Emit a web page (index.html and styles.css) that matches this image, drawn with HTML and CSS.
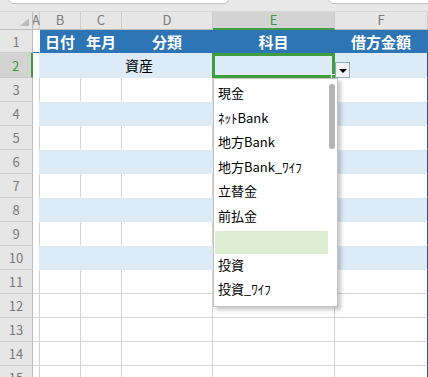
FILE: index.html
```html
<!DOCTYPE html>
<html lang="ja">
<head>
    <meta charset="UTF-8">
    <title>科目 入力</title>
    <link rel="stylesheet" href="styles.css">
</head>
<body>
    <div class="topbar">
        <div class="bar-box box-left"></div>
        <div class="bar-box box-right"></div>
    </div>

    <div class="sheet">
        <!-- 列見出し -->
        <div class="row col-head">
            <div class="corner"><span class="tri"></span></div>
            <div class="ch">A</div>
            <div class="ch">B</div>
            <div class="ch">C</div>
            <div class="ch">D</div>
            <div class="ch active">E</div>
            <div class="ch">F</div>
        </div>

        <!-- テーブル見出し -->
        <div class="row head">
            <div class="rh">1</div>
            <div class="c a"></div>
            <div class="c">日付</div>
            <div class="c">年月</div>
            <div class="c">分類</div>
            <div class="c">科目</div>
            <div class="c">借方金額</div>
        </div>

        <div class="row band r2">
            <div class="rh sel">2</div>
            <div class="c a"></div>
            <div class="c"></div>
            <div class="c"></div>
            <div class="c left">資産</div>
            <div class="c"></div>
            <div class="c last"></div>
        </div>

        <div class="row plain">
            <div class="rh">3</div><div class="c a"></div><div class="c"></div><div class="c"></div><div class="c"></div><div class="c"></div><div class="c last"></div>
        </div>
        <div class="row band">
            <div class="rh">4</div><div class="c a"></div><div class="c"></div><div class="c"></div><div class="c"></div><div class="c"></div><div class="c last"></div>
        </div>
        <div class="row plain">
            <div class="rh">5</div><div class="c a"></div><div class="c"></div><div class="c"></div><div class="c"></div><div class="c"></div><div class="c last"></div>
        </div>
        <div class="row band">
            <div class="rh">6</div><div class="c a"></div><div class="c"></div><div class="c"></div><div class="c"></div><div class="c"></div><div class="c last"></div>
        </div>
        <div class="row plain">
            <div class="rh">7</div><div class="c a"></div><div class="c"></div><div class="c"></div><div class="c"></div><div class="c"></div><div class="c last"></div>
        </div>
        <div class="row band">
            <div class="rh">8</div><div class="c a"></div><div class="c"></div><div class="c"></div><div class="c"></div><div class="c"></div><div class="c last"></div>
        </div>
        <div class="row plain">
            <div class="rh">9</div><div class="c a"></div><div class="c"></div><div class="c"></div><div class="c"></div><div class="c"></div><div class="c last"></div>
        </div>
        <div class="row band">
            <div class="rh">10</div><div class="c a"></div><div class="c"></div><div class="c"></div><div class="c"></div><div class="c"></div><div class="c last"></div>
        </div>

        <!-- テーブル外 -->
        <div class="row">
            <div class="rh">11</div><div class="c a"></div><div class="c"></div><div class="c"></div><div class="c"></div><div class="c"></div><div class="c last"></div>
        </div>
        <div class="row">
            <div class="rh">12</div><div class="c a"></div><div class="c"></div><div class="c"></div><div class="c"></div><div class="c"></div><div class="c last"></div>
        </div>
        <div class="row">
            <div class="rh">13</div><div class="c a"></div><div class="c"></div><div class="c"></div><div class="c"></div><div class="c"></div><div class="c last"></div>
        </div>
        <div class="row">
            <div class="rh">14</div><div class="c a"></div><div class="c"></div><div class="c"></div><div class="c"></div><div class="c"></div><div class="c last"></div>
        </div>
        <div class="row">
            <div class="rh">15</div><div class="c a"></div><div class="c"></div><div class="c"></div><div class="c"></div><div class="c"></div><div class="c last"></div>
        </div>

        <!-- 選択セルと入力規則のリスト -->
        <div class="selection"><span class="fill-handle"></span></div>
        <div class="drop-btn"><span class="arrow"></span></div>

        <ul class="dropdown">
            <li>現金</li>
            <li>ﾈｯﾄBank</li>
            <li>地方Bank</li>
            <li>地方Bank_ﾜｲﾌ</li>
            <li>立替金</li>
            <li>前払金</li>
            <li class="hover"></li>
            <li>投資</li>
            <li>投資_ﾜｲﾌ</li>
            <span class="thumb"></span>
        </ul>
    </div>
</body>
</html>
```

FILE: styles.css
```css
* {
    box-sizing: border-box;
    margin: 0;
    padding: 0;
}

body {
    font-family: "Noto Sans CJK JP", "Noto Sans", sans-serif;
    background: #ffffff;
    width: 428px;
    height: 377px;
    overflow: hidden;
}

/* 上部の数式バー部分 */
.topbar {
    position: relative;
    height: 12px;
    background: #e8e8e8;
    border-bottom: 1px solid #d6d6d6;
}

.bar-box {
    position: absolute;
    top: -4px;
    height: 8px;
    background: #ffffff;
    border: 1px solid #c4c4c4;
    border-radius: 0 0 5px 5px;
}

.box-left {
    left: 8px;
    width: 221px;
}

.box-right {
    left: 328px;
    width: 110px;
}

.sheet {
    position: relative;
}

.row {
    display: grid;
    grid-template-columns: 33px 7px 41px 41px 91px 122px 93px;
    height: 24px;
}

.c {
    border-right: 1px solid #d4d4d4;
    border-bottom: 1px solid #d4d4d4;
    display: flex;
    align-items: center;
    justify-content: center;
    white-space: nowrap;
    font-size: 14px;
    color: #000;
}

.c.last {
    border-right: 1px solid #2f4f8f;
}

.c.left {
    justify-content: flex-start;
    padding-left: 3px;
}

.rh {
    background: #e6e6e6;
    border-right: 1px solid #bdbdbd;
    border-bottom: 1px solid #cbcbcb;
    color: #7a7a7a;
    font-size: 13px;
    display: flex;
    align-items: center;
    justify-content: center;
}

.rh.sel {
    background: #d3d3d3;
    color: #3a9a3a;
    border-right: 2px solid #3f9f3f;
}

/* 列見出し */
.col-head {
    height: 18px;
}

.corner {
    position: relative;
    background: #e6e6e6;
    border-right: 1px solid #bdbdbd;
    border-bottom: 1px solid #bdbdbd;
}

.tri {
    position: absolute;
    right: 3px;
    bottom: 3px;
    width: 0;
    height: 0;
    border-left: 9px solid transparent;
    border-bottom: 8px solid #bcbcbc;
}

.ch {
    background: #e6e6e6;
    border-right: 1px solid #cbcbcb;
    border-bottom: 1px solid #bdbdbd;
    color: #7a7a7a;
    font-size: 13px;
    line-height: 16px;
    display: flex;
    justify-content: center;
    overflow: visible;
}

.ch.active {
    background: #d3d3d3;
    color: #3a9a3a;
    border-bottom: 2px solid #3f9f3f;
}

/* テーブル見出し行 */
.head {
    height: 23px;
}

.head .c {
    background: #2e75b6;
    border-color: #2e75b6;
    color: #ffffff;
    font-weight: 700;
    font-size: 15px;
}

.head .c.a {
    background: #ffffff;
    border-right-color: #ffffff;
}

.r2 {
    height: 25px;
}

/* 縞模様 */
.band .c {
    background: #ddebf7;
    border-color: #ddebf7;
}

.band .c.a {
    background: #ffffff;
    border-right-color: #ddebf7;
    border-bottom-color: #ffffff;
}

.band .c.last {
    border-right-color: #2f4f8f;
}

.plain .c {
    border-bottom-color: #ffffff;
}

/* 選択セル */
.selection {
    position: absolute;
    left: 212px;
    top: 41px;
    width: 123px;
    height: 25px;
    border: 3px solid #3f9f3f;
}

.fill-handle {
    position: absolute;
    right: -4px;
    bottom: -4px;
    width: 5px;
    height: 5px;
    background: #3f9f3f;
    border: 1px solid #ffffff;
}

.drop-btn {
    position: absolute;
    left: 335px;
    top: 50px;
    width: 15px;
    height: 16px;
    background: #f4f4f4;
    border: 1px solid #8fa9c6;
    display: flex;
    align-items: center;
    justify-content: center;
}

.arrow {
    width: 0;
    height: 0;
    border-left: 4px solid transparent;
    border-right: 4px solid transparent;
    border-top: 4px solid #000;
    margin-top: 1px;
}

/* ドロップダウンリスト */
.dropdown {
    position: absolute;
    left: 213px;
    top: 66px;
    width: 125px;
    height: 229px;
    list-style: none;
    background: #ffffff;
    border: 1px solid #c2c2c2;
    box-shadow: 3px 3px 4px rgba(0, 0, 0, 0.22);
    padding-top: 2px;
}

.dropdown li {
    height: 24.5px;
    line-height: 24.5px;
    padding-left: 4px;
    width: 113px;
    font-size: 13px;
    color: #000;
    white-space: nowrap;
}

.dropdown li.hover {
    background: #ddeed5;
    margin-left: 1px;
    height: 23px;
    margin-top: 3px;
    margin-bottom: -1.5px;
}

.thumb {
    position: absolute;
    right: 2px;
    top: 5px;
    width: 6px;
    height: 65px;
    background: #b4b4b4;
    border-radius: 3px;
}
```
